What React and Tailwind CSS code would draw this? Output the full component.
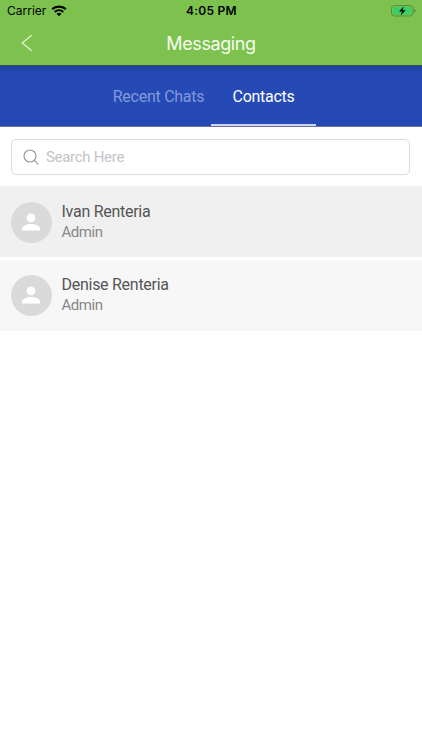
import React, { useState } from 'react';

const contacts = [
  { id: 1, name: 'Ivan Renteria', role: 'Admin', rowClass: 'bg-[#f0f0f0] pt-px' },
  { id: 2, name: 'Denise Renteria', role: 'Admin', rowClass: 'bg-[#f7f7f7] pb-px' },
];

const StatusBar = () => (
  <div className="grid h-[22px] grid-cols-3 items-center pl-[7px] pr-[6px] font-['Inter',sans-serif] text-black">
    <div className="flex items-center gap-[5px]">
      <span className="text-[12px] leading-none">Carrier</span>
      <svg className="h-[12px] w-[16px]" viewBox="0 0 16 12" fill="none">
        <path d="M1.2 4.2a10 10 0 0 1 13.6 0" stroke="black" strokeWidth="2.3" />
        <path d="M3.7 6.9a6.4 6.4 0 0 1 8.6 0" stroke="black" strokeWidth="2" />
        <path d="M8 11.2 5.6 8.8a3.5 3.5 0 0 1 4.8 0z" fill="black" />
      </svg>
    </div>
    <span className="text-center text-[12px] font-semibold leading-none tracking-[0.25px]">4:05 PM</span>
    <svg className="h-[12px] w-[25px] justify-self-end" viewBox="0 0 25 12" fill="none">
      <rect x="0.5" y="0.5" width="21.5" height="10.5" rx="3" stroke="#5a8c3a" />
      <rect x="2" y="2" width="18.5" height="7.5" rx="1.7" fill="#37cf68" />
      <path d="M23.3 4v3.6c.8-.3 1.2-1 1.2-1.8s-.4-1.5-1.2-1.8z" fill="#4f7b32" />
      <path d="M12.8 1.3 8 6.4h3l-1.3 4 4.9-5.2h-3z" fill="black" />
    </svg>
  </div>
);

const Avatar = () => (
  <div className="flex size-[41px] shrink-0 items-center justify-center rounded-full bg-[#dadada]">
    <svg className="h-[18px] w-[18px]" viewBox="0 0 18 18" fill="white">
      <circle cx="9" cy="4.9" r="4.4" />
      <path d="M0 17.5v-1.7C0 12.7 5 11 9 11s9 1.7 9 4.8v1.7z" />
    </svg>
  </div>
);

export default function App() {
  const [tab, setTab] = useState('contacts');

  return (
    <div className="flex h-[750px] w-[422px] flex-col overflow-hidden bg-white font-['Roboto',sans-serif]">
      <header className="h-[65px] shrink-0 bg-[#7dc24f]">
        <StatusBar />
        <div className="grid h-[42px] grid-cols-[54px_1fr_54px] items-center">
          <button className="pl-[21px]" aria-label="Back">
            <svg className="h-[18px] w-[12px]" viewBox="0 0 12 18" fill="none" stroke="#e0f2d4" strokeWidth="1.3">
              <path d="M10.7 1.2 1.2 9l9.5 7.8" />
            </svg>
          </button>
          <h1 className="pt-px text-center font-['Inter',sans-serif] text-[18px] leading-none tracking-[-0.4px] text-[#f6fcef]">
            Messaging
          </h1>
        </div>
      </header>

      {/* Tabs */}
      <nav className="flex h-[62px] shrink-0 justify-center border-b border-t border-b-[#6d6f98] border-t-[#31574f] bg-linear-to-b from-[#203f9c] to-[#2549b5] to-[6px] text-[16px] tracking-[-0.27px]">
        <button
          onClick={() => setTab('recent')}
          className={`w-[105px] border-b-2 pt-[4px] ${
            tab === 'recent' ? 'border-[#ccd4ee] text-white' : 'border-transparent text-[#8299db]'
          }`}
        >
          Recent Chats
        </button>
        <button
          onClick={() => setTab('contacts')}
          className={`w-[105px] border-b-2 pt-[4px] ${
            tab === 'contacts' ? 'border-[#ccd4ee] text-white' : 'border-transparent text-[#8299db]'
          }`}
        >
          Contacts
        </button>
      </nav>

      {/* Search */}
      <div className="px-[11px] pb-[11px] pt-[12px]">
        <div className="flex h-[36px] w-[399px] items-center gap-[7px] rounded-[5px] border border-[#dcdcdc] px-[11px]">
          <svg className="size-[16px] shrink-0" viewBox="0 0 16 16" fill="none" stroke="#999999" strokeWidth="1.2">
            <circle cx="7" cy="7" r="6" />
            <path d="m11.3 11.3 4 4" />
          </svg>
          <span className="text-[15px] leading-none tracking-[-0.3px] text-[#c4c4c8]">Search Here</span>
        </div>
      </div>

      {/* Contact list */}
      <ul className="flex flex-col gap-[3px]">
        {contacts.map((contact) => (
          <li
            key={contact.id}
            className={`flex h-[71px] items-center gap-[10px] pl-[10.5px] ${contact.rowClass}`}
          >
            <Avatar />
            <div>
              <p className="text-[16px] leading-[20px] tracking-[-0.27px] text-[#555555]">{contact.name}</p>
              <p className="text-[15px] leading-[20px] tracking-[-0.45px] text-[#888888]">{contact.role}</p>
            </div>
          </li>
        ))}
      </ul>
    </div>
  );
}
